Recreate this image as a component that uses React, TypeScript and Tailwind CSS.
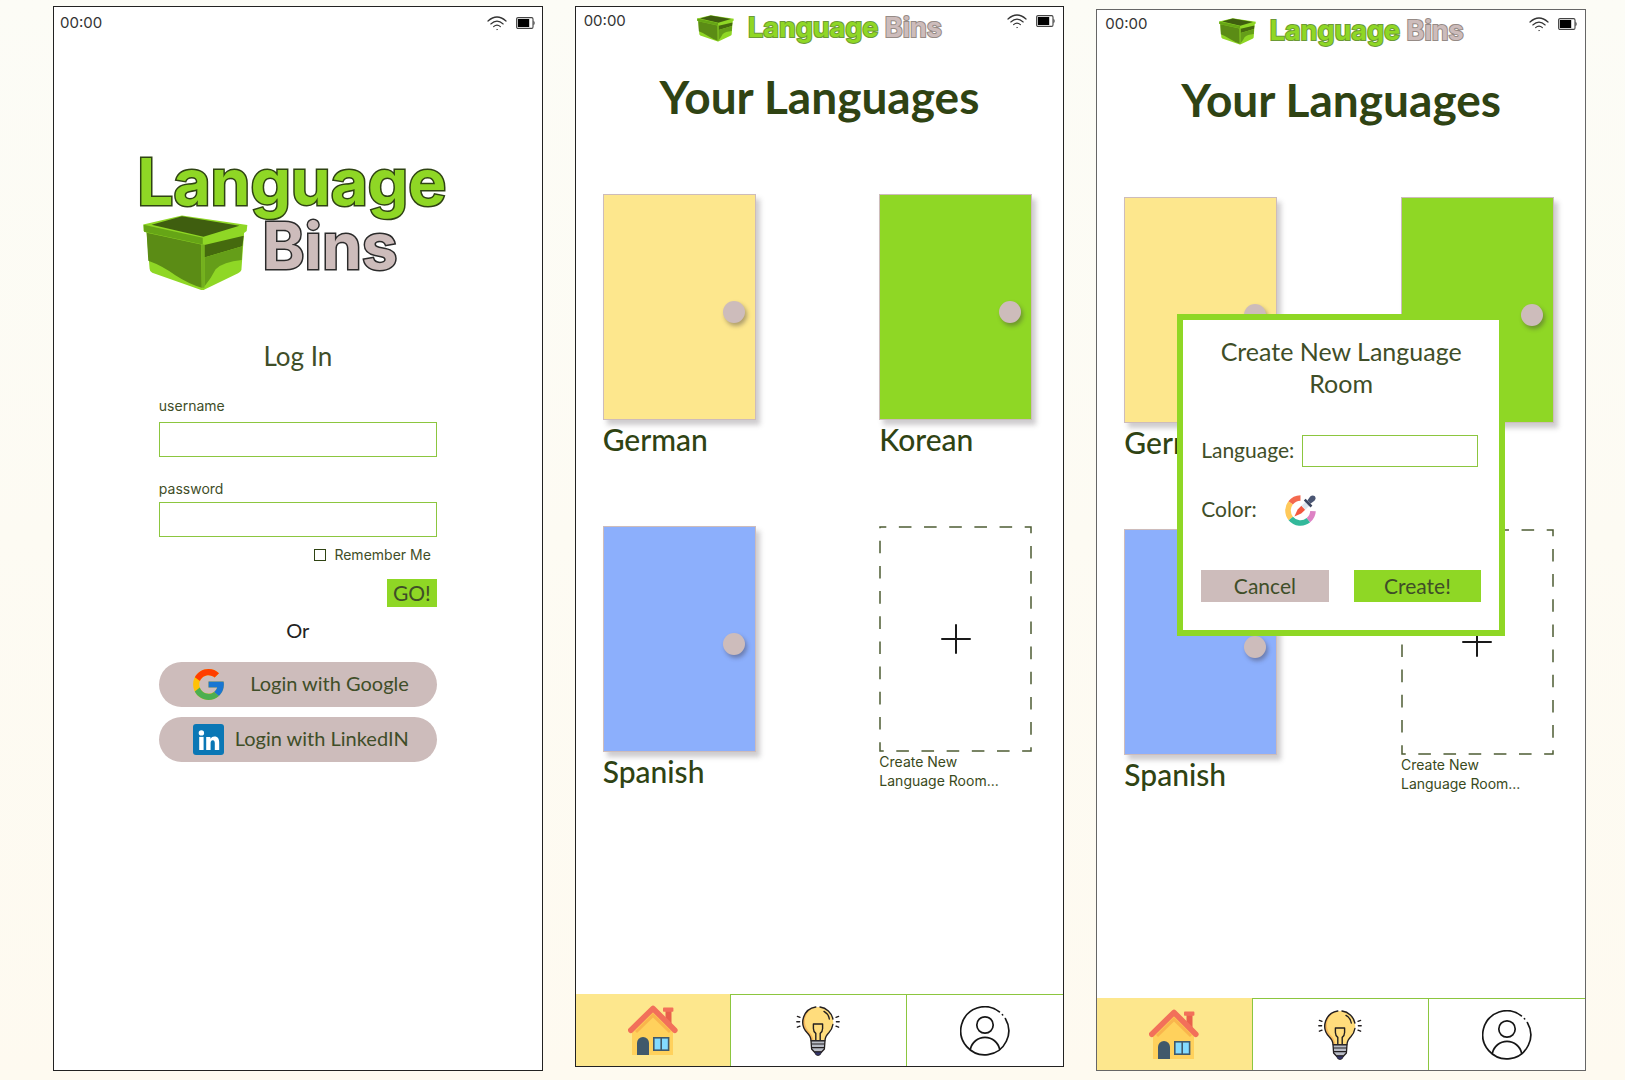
import React from 'react';
import { FcGoogle } from 'react-icons/fc';

function BinIcon({ className }: { className: string }) {
  return (
    <svg viewBox="302 644 318 229" className={className} aria-hidden="true">
      <path
        d="M303 672 L420 645 L618 674 L616 692 L608 698 L600 810 Q598 816 590 820 L490 868 Q483 873 474 869 L330 818 Q322 814 322 806 L313 697 L304 692 Z"
        fill="#8fd725"
      />
      <path d="M328 673 L420 647 L594 676 L485 709 Z" fill="#3f5e0f" />
      <path d="M304 673 L483 712 L483 733 L305 694 Z" fill="#66a516" />
      <path d="M313 697 L478 733 L480 864 Q440 852 400 826 Q360 797 318 782 Z" fill="#5b8c15" />
      <path d="M488 734 L607 706 L603 738 L488 772 Z" fill="#456a0e" />
      <path d="M488 772 L603 738 L601 780 Q545 785 522 808 Q508 836 488 860 Z" fill="#659e19" />
      <path d="M478 733 L488 733 L488 864 L480 864 Z" fill="#74b01f" />
    </svg>
  );
}

function WifiIcon() {
  return (
    <svg viewBox="0 0 20 15" className="h-[15px] w-5" fill="none" stroke="#333" strokeLinecap="round" aria-hidden="true">
      <path d="M1 5 Q10 -3 19 5" strokeWidth="1.2" />
      <path d="M3.8 8 Q10 2.2 16.2 8" strokeWidth="1.1" />
      <path d="M6.6 10.7 Q10 7.6 13.4 10.7" strokeWidth="1.1" />
      <circle cx="10" cy="13.6" r="0.4" strokeWidth="0.5" />
    </svg>
  );
}

function BatteryIcon() {
  return (
    <svg viewBox="0 0 19 12" className="h-3 w-[19px]" aria-hidden="true">
      <rect x="0.6" y="0.6" width="16.4" height="10.8" rx="1.4" fill="#fff" stroke="#444" strokeWidth="1.1" />
      <rect x="1.8" y="2" width="11.4" height="8" fill="#000" />
      <path d="M17.6 3.6 Q19.6 6 17.6 8.4 Z" fill="#222" />
    </svg>
  );
}

function StatusIcons() {
  return (
    <div className="flex h-5 items-center justify-end gap-[9px]">
      <WifiIcon />
      <BatteryIcon />
    </div>
  );
}

function Clock() {
  return <time className="font-['Inter'] text-[15px] leading-5 text-[#333]">00:00</time>;
}

function HouseIcon() {
  return (
    <svg viewBox="0 0 50 50" className="size-[50px]" aria-hidden="true">
      <path d="M25 6 L45 25 V50 H4 V25 Z" fill="#ffd15c" />
      <path d="M25 8 L43 26 L41 28 L25 12.4 L9 28 L7 26 Z" fill="#f9b54c" />
      <path d="M37.5 5 H43.5 V20 L37.5 15 Z" fill="#e8604c" />
      <rect x="35" y="2.6" width="10.4" height="4.2" rx="0.8" fill="#f2705a" />
      <path d="M2.8 25.2 L25 3.4 L46.8 25.2" fill="none" stroke="#f2705a" strokeWidth="5.6" strokeLinecap="round" strokeLinejoin="round" />
      <path d="M9 50 V38 a6 6 0 0 1 12 0 V50 Z" fill="#40596b" />
      <rect x="25" y="32" width="16.4" height="14" fill="#40596b" />
      <rect x="26.6" y="33.6" width="5.8" height="10.8" fill="#84dbff" />
      <rect x="34" y="33.6" width="5.8" height="10.8" fill="#84dbff" />
    </svg>
  );
}

function BulbIcon() {
  return (
    <svg viewBox="0 0 44 50" className="h-[50px] w-11" fill="none" aria-hidden="true">
      <path
        d="M22 0.9 a15.2 15.2 0 0 1 11 25.6 Q29 30.5 29 34.5 H15 Q15 30.5 11 26.5 A15.2 15.2 0 0 1 22 0.9 Z"
        fill="#ffdc7c"
      />
      <path d="M19.5 1 A15.2 15.2 0 0 0 11 26.5 Q15 30.5 15 34.5 H17.5 Q17 29 12.5 25 A15 15 0 0 1 19.5 1 Z" fill="#f5b95c" />
      <g stroke="#231f20" strokeWidth="1.4" strokeLinecap="round" strokeLinejoin="round">
        <path d="M19.8 1 A15.2 15.2 0 0 0 11 26.5 Q15 30.5 15 34.6 H29 Q29 30.5 33 26.5 A15.2 15.2 0 0 0 36.9 18.5" />
        <path d="M24 1 A15.2 15.2 0 0 1 36.9 13" />
        <path d="M28 5.4 Q32.6 8 33.3 13" />
        <path d="M19.8 34.4 V27.4 Q17.4 25.6 17.4 22.6 V18 H26.6 V22.6 Q26.6 25.6 24.2 27.4 V34.4" />
        <path d="M1.4 10.4 L4 11.3 M0.8 15.7 H3.6 M1.4 21.2 L4 20.2 M42.6 10.4 L40 11.3 M43.2 15.7 H40.4 M42.6 21.2 L40 20.2" />
      </g>
      <path d="M15 34.8 H29 L28.4 43 L25.6 46 H18.4 L15.6 43 Z" fill="#b9bcc6" stroke="#231f20" strokeWidth="1.3" strokeLinejoin="round" />
      <path d="M15.2 38 H28.8 M15.5 41.6 H28.5" stroke="#231f20" strokeWidth="1.2" />
      <path d="M18.4 46 H25.6 Q24.6 49.6 22 49.6 Q19.4 49.6 18.4 46 Z" fill="#33346b" stroke="#231f20" strokeWidth="0.8" />
    </svg>
  );
}

function PersonIcon() {
  return (
    <svg viewBox="0 0 50 50" className="size-[50px]" fill="none" stroke="#161616" strokeWidth="1.7" strokeLinecap="round" aria-hidden="true">
      <path d="M45.4 12.6 A24 24 0 1 1 39.4 5.8" />
      <path d="M42.4 8.6 L42.6 8.9" />
      <circle cx="25" cy="19" r="8.2" />
      <path d="M10.3 43.4 A15 15 0 0 1 39.7 43.4" />
    </svg>
  );
}

function ColorPickerIcon() {
  return (
    <svg viewBox="0 0 31 31" className="size-[31px]" fill="none" aria-hidden="true">
      <g strokeWidth="5.6">
        <path d="M15.5 3 A12.5 12.5 0 0 0 5.6 7.9" stroke="#f4694f" />
        <path d="M5.6 7.9 A12.5 12.5 0 0 0 5.8 23.4" stroke="#ffc95a" />
        <path d="M5.8 23.4 A12.5 12.5 0 0 0 23.4 25.2" stroke="#33b99b" />
        <path d="M23.4 25.2 A12.5 12.5 0 0 0 28 16.2" stroke="#dd82c4" />
      </g>
      <path d="M9.4 21.6 L12.6 14.6 L16.4 10.8 L20.2 14.8 L16.2 18.6 Z" fill="#f4583f" />
      <path d="M16.4 10.8 L21 6.4 L24.8 10.4 L20.2 14.8 Z" fill="#dfe6ee" />
      <path d="M20.6 3.8 L27.4 10.6 L25.6 12.4 L18.8 5.6 Z" fill="#3c4660" />
      <path d="M22.4 5.6 L25.2 1.6 Q27.6 -0.4 29.9 1.3 Q31.4 3.6 29.4 5.8 L25.4 8.8 Z" fill="#4b5673" />
    </svg>
  );
}

function LinkedInIcon() {
  return (
    <svg viewBox="0 0 31 31" className="size-[31px]" aria-hidden="true">
      <rect width="31" height="31" rx="3" fill="#0a77b5" />
      <g fill="#fff">
        <circle cx="8.4" cy="8.9" r="2.7" />
        <path d="M6.2 12.9 H10.6 V26 H6.2 Z" />
        <path d="M13.2 12.9 H17.4 V14.7 Q18.8 12.5 21.4 12.5 C25.2 12.5 26.2 15.2 26.2 18.6 V26 H21.8 V19.4 C21.8 17.6 21.5 16.2 19.8 16.2 C18 16.2 17.6 17.6 17.6 19.3 V26 H13.2 Z" />
      </g>
    </svg>
  );
}

function PlusIcon() {
  return (
    <svg viewBox="0 0 30 30" className="size-[30px]" stroke="#1a1a1a" strokeWidth="2" strokeLinecap="round" aria-hidden="true">
      <path d="M15 1 V29 M1 15 H29" />
    </svg>
  );
}

function HeaderLogo() {
  return (
    <div className="mt-1 flex h-[26px] items-center gap-3.5">
      <BinIcon className="h-[27px] w-[37px]" />
      <p className="font-['Inter'] text-[27px] leading-[26px] font-bold whitespace-nowrap [paint-order:stroke_fill]">
        <span className="text-[#8fd725] [-webkit-text-stroke:2px_#6c9a35]">Language</span>{' '}
        <span className="text-[#cdbcbb] [-webkit-text-stroke:2px_#968b86]">Bins</span>
      </p>
    </div>
  );
}

function Door({ name, color }: { name: string; color: string }) {
  return (
    <a href="#room" className="block w-[153px]">
      <span
        className={`flex h-[226px] items-center justify-end border border-[#cdbcbb] pt-2.5 pr-2.5 shadow-[4px_5px_5px_rgba(60,50,60,0.25)] ${color}`}
      >
        <span className="size-[22px] rounded-full bg-[#cdbcbb] shadow-[2px_3px_4px_rgba(60,50,60,0.4)]" />
      </span>
      <span className="block text-[30px] leading-[38px] font-medium text-[#2f4313]">{name}</span>
    </a>
  );
}

function NewRoom() {
  return (
    <button type="button" className="flex w-[153px] flex-col text-left">
      <span className="relative flex h-[226px] w-full items-center justify-center">
        <svg className="absolute inset-0 size-full" fill="none" aria-hidden="true">
          <rect x="1" y="1" width="151" height="224" stroke="#4d5c33" strokeWidth="1.5" strokeDasharray="12.6 12.57" strokeDashoffset="6.3" />
        </svg>
        <PlusIcon />
      </span>
      <span className="block font-['Inter'] text-[14px] leading-[19px] text-[#3a4a20]">
        Create New
        <br />
        Language Room...
      </span>
    </button>
  );
}

function NavBar() {
  return (
    <nav aria-label="Main" className="mt-auto grid h-[72px] grid-cols-[154fr_176fr_157fr]">
      <a href="#home" aria-label="Home" className="flex items-center justify-center bg-[#fde78d]">
        <HouseIcon />
      </a>
      <a href="#ideas" aria-label="Ideas" className="flex items-center justify-center border-t border-l border-[#8cc63f]">
        <BulbIcon />
      </a>
      <a href="#profile" aria-label="Profile" className="flex items-center justify-center border-t border-l border-[#8cc63f]">
        <PersonIcon />
      </a>
    </nav>
  );
}

function LanguagesScreen({ className, children }: { className: string; children?: React.ReactNode }) {
  return (
    <section className={`relative flex flex-col border bg-white ${className}`}>
      <header className="grid grid-cols-[1fr_auto_1fr] items-start pt-1 pr-2 pl-2">
        <Clock />
        <HeaderLogo />
        <StatusIcons />
      </header>
      <h1 className="mt-[30px] text-center text-[46px] leading-[52px] font-bold text-[#2f4313]">Your Languages</h1>
      <div className="mt-[71px] mr-[31px] ml-[27px] grid grid-cols-[auto_auto] justify-between gap-y-[68px]">
        <Door name="German" color="bg-[#fde78d]" />
        <Door name="Korean" color="bg-[#8fd725]" />
        <Door name="Spanish" color="bg-[#8caffc]" />
        <NewRoom />
      </div>
      <NavBar />
      {children}
    </section>
  );
}

function CreateRoomDialog() {
  return (
    <form
      role="dialog"
      aria-labelledby="create-title"
      className="absolute top-[304px] left-1/2 w-[328px] -translate-x-1/2 border-[6px] border-[#8fd725] bg-white px-[18px] pt-[15px] pb-[28px] text-[#3f4e28]"
    >
      <h2 id="create-title" className="px-2 text-center text-[25px] leading-8">
        Create New Language Room
      </h2>
      <div className="mt-9 mr-[3px] flex items-center gap-2">
        <label htmlFor="language" className="pb-0.5 text-[21px] leading-[30px]">
          Language:
        </label>
        <input id="language" className="h-8 min-w-0 flex-1 border border-[#8cc63f] px-2 outline-none" />
      </div>
      <div className="mt-[27px] flex items-center gap-7">
        <span className="pb-0.5 text-[21px] leading-[30px]">Color:</span>
        <button type="button" aria-label="Pick a color">
          <ColorPickerIcon />
        </button>
      </div>
      <div className="mt-11 grid grid-cols-2 gap-[25px] text-[21px] leading-8">
        <button type="button" className="bg-[#cdbcbb]">
          Cancel
        </button>
        <button type="submit" className="bg-[#8fd725]">
          Create!
        </button>
      </div>
    </form>
  );
}

function LoginScreen() {
  return (
    <section className="mt-1.5 mb-[9px] flex flex-col border border-[#222] bg-white">
      <header className="flex justify-between pt-1.5 pr-[7px] pl-1.5">
        <Clock />
        <StatusIcons />
      </header>
      <div className="mx-auto mt-[117px] w-fit pr-3 font-['Inter'] text-[64px] leading-16 font-bold [paint-order:stroke_fill]">
        <p className="text-[#8fd725] [-webkit-text-stroke:3px_#2f4313]">Language</p>
        <div className="flex gap-3.5 pl-1.5">
          <BinIcon className="mt-px h-[76px] w-[105px]" />
          <p className="text-[#cdbcbb] [-webkit-text-stroke:3px_#2b2b2b]">Bins</p>
        </div>
      </div>
      <form className="mx-auto mt-[49px] flex w-[278px] flex-col text-[#3f4e28]">
        <h2 className="text-center text-[26px] leading-8">Log In</h2>
        <label htmlFor="username" className="mt-6 font-['Inter'] text-[14px] leading-5">
          username
        </label>
        <input id="username" autoComplete="off" className="mt-1.5 h-[35px] border border-[#8cc63f] px-2 outline-none" />
        <label htmlFor="password" className="mt-[22px] font-['Inter'] text-[14px] leading-5">
          password
        </label>
        <input id="password" type="password" className="mt-[3px] h-[35px] border border-[#8cc63f] px-2 outline-none" />
        <div className="mt-2 mr-1.5 flex items-center justify-end gap-2">
          <input id="remember" type="checkbox" className="size-3 appearance-none border border-[#2f4313] checked:bg-[#8fd725]" />
          <label htmlFor="remember" className="font-['Inter'] text-[14px] leading-5">
            Remember Me
          </label>
        </div>
        <button type="submit" className="mt-3.5 w-[50px] self-end bg-[#8fd725] text-[21px] leading-7">
          GO!
        </button>
        <p className="mt-[9px] text-center text-[20px] leading-7 text-[#222]">Or</p>
        <button type="button" className="mt-[18px] flex h-[45px] items-center justify-between rounded-full bg-[#cdbcbb] pr-7 pl-[31px] text-[20px]">
          <FcGoogle className="size-[37px]" aria-hidden="true" />
          <span className="pb-1">Login with Google</span>
        </button>
        <button type="button" className="mt-2.5 flex h-[45px] items-center justify-between rounded-full bg-[#cdbcbb] pr-7 pl-[34px] text-[20px]">
          <LinkedInIcon />
          <span className="pb-1">Login with LinkedIN</span>
        </button>
      </form>
    </section>
  );
}

export default function App() {
  return (
    <main className="grid min-h-screen grid-cols-3 gap-8 bg-linear-to-b from-[#fcfcf6] to-[#fefaf0] pr-[39px] pl-[53px] font-['Lato',sans-serif]">
      <LoginScreen />
      <LanguagesScreen className="mt-1.5 mb-[13px] border-[#222]" />
      <LanguagesScreen className="mt-[9px] mb-[9px] border-[#666]">
        <CreateRoomDialog />
      </LanguagesScreen>
    </main>
  );
}
